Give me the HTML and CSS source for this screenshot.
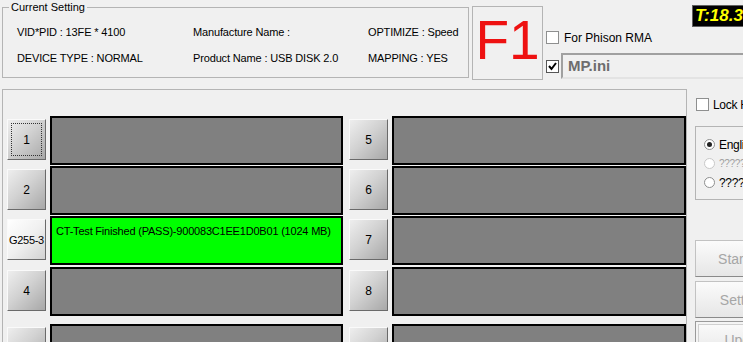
FILE: index.html
```html
<!DOCTYPE html>
<html>
<head>
    <title>MPTool</title>
    <link rel="stylesheet" href="styles.css">
</head>
<body>
    <div class="top">
        <!-- current device setting -->
        <fieldset class="current">
            <legend>Current Setting</legend>
            <div class="info">
                <span>VID*PID : 13FE * 4100</span>
                <span>Manufacture Name :</span>
                <span>OPTIMIZE : Speed</span>
                <span>DEVICE TYPE : NORMAL</span>
                <span>Product Name : USB DISK 2.0</span>
                <span>MAPPING : YES</span>
            </div>
        </fieldset>

        <div class="fkey">F1</div>

        <div class="options">
            <div class="temp">T:18.3&deg;C</div>
            <label class="check-row">
                <span class="check"></span>
                <span>For Phison RMA</span>
            </label>
            <div class="check-row ini-row">
                <span class="check checked">
                    <svg width="9" height="9" viewBox="0 0 9 9"><polyline points="1,4 3.5,7 8,1" fill="none" stroke="#000" stroke-width="2"/></svg>
                </span>
                <div class="ini">MP.ini</div>
            </div>
        </div>
    </div>

    <div class="bottom">
        <div class="panel">
            <div class="slots">
                <div class="slot"><button class="port focus">1</button><div class="bar"></div></div>
                <div class="slot"><button class="port">2</button><div class="bar"></div></div>
                <div class="slot"><button class="port light">G255-3</button><div class="bar pass">CT-Test Finished (PASS)-900083C1EE1D0B01 (1024 MB)</div></div>
                <div class="slot"><button class="port">4</button><div class="bar"></div></div>
                <div class="slot"><button class="port">9</button><div class="bar"></div></div>

                <div class="slot"><button class="port">5</button><div class="bar"></div></div>
                <div class="slot"><button class="port">6</button><div class="bar"></div></div>
                <div class="slot"><button class="port">7</button><div class="bar"></div></div>
                <div class="slot"><button class="port">8</button><div class="bar"></div></div>
                <div class="slot"><button class="port">13</button><div class="bar"></div></div>
            </div>
        </div>

        <div class="side">
            <label class="check-row lock">
                <span class="check"></span>
                <span>Lock HUB</span>
            </label>
            <div class="lang">
                <div class="radio-row"><span class="radio on"></span><span>English</span></div>
                <div class="radio-row disabled"><span class="radio"></span><span>????????</span></div>
                <div class="radio-row"><span class="radio"></span><span>????????</span></div>
            </div>
            <button class="action first">Start Test</button>
            <button class="action">Setting...</button>
            <button class="action last">Update</button>
        </div>
    </div>
</body>
</html>
```

FILE: styles.css
```css
body {
    margin: 0;
    width: 743px;
    height: 342px;
    overflow: hidden;
    background: #f0f0f0;
    font-family: "Liberation Sans", Arial, sans-serif;
    font-size: 11px;
    color: #000;
}

.top {
    display: flex;
    height: 85px;
}

.top > * {
    flex: none;
}

/* group box */
.current {
    margin: 1px 0 0 2px;
    padding: 0;
    width: 467px;
    height: 77px;
    box-sizing: border-box;
    border: 1px solid #b4b4b4;
    min-width: 0;
}

.current legend {
    margin-left: 6px;
    padding: 0 2px;
    line-height: 13px;
    font-size: 11px;
}

.info {
    display: grid;
    grid-template-columns: 176px 175px 1fr;
    grid-auto-rows: 26px;
    align-items: center;
    padding: 5px 0 0 14px;
    white-space: nowrap;
    letter-spacing: -0.15px;
}

.fkey {
    margin: 6px 0 0 3px;
    width: 71px;
    height: 74px;
    box-sizing: border-box;
    border: 1px solid #b4b4b4;
    display: flex;
    align-items: center;
    justify-content: center;
    padding-bottom: 5px;
    color: #ee1111;
    font-size: 55px;
    line-height: 1;
}

.options {
    margin-left: 3px;
    width: 210px;
}

.temp {
    margin: 5px 0 0 146px;
    height: 22px;
    box-sizing: border-box;
    border: 1px solid #606060;
    background: #000;
    color: #ffff00;
    font-weight: bold;
    font-style: italic;
    font-size: 17px;
    line-height: 20px;
    padding-left: 2px;
    white-space: nowrap;
    overflow: hidden;
}

.check-row {
    display: flex;
    align-items: center;
    gap: 5px;
    font-size: 12px;
}

.options .check-row:first-of-type {
    margin-top: 3px;
    height: 15px;
}

.check {
    width: 13px;
    height: 13px;
    box-sizing: border-box;
    border: 1px solid #8e8f8f;
    background: #fff;
    display: flex;
    align-items: center;
    justify-content: center;
    flex: none;
}

.check.checked {
    border-color: #555;
}

.ini-row {
    margin-top: 8px;
    gap: 2px;
}

.ini {
    flex: 1;
    height: 26px;
    box-sizing: border-box;
    border: 2px solid #a0a0a0;
    border-right: none;
    border-bottom-color: #e3e3e3;
    padding-left: 5px;
    color: #6d6d6d;
    font-weight: bold;
    font-size: 15px;
    line-height: 22px;
}

.bottom {
    display: flex;
}

.bottom > * {
    flex: none;
}

.panel {
    margin: 4px 0 0 2px;
    width: 685px;
    height: 300px;
    box-sizing: border-box;
    border: 1px solid #b4b4b4;
    padding: 26px 1px 0 4px;
}

.slots {
    display: grid;
    grid-template-columns: 336px 337px;
    column-gap: 6px;
    grid-template-rows: 50px 50px 51px 57px 50px;
    grid-auto-flow: column;
}

.slot {
    display: flex;
    align-items: flex-start;
    gap: 4px;
}

.port {
    margin-top: 3px;
    width: 39px;
    height: 41px;
    padding: 0;
    flex: none;
    border: 1px solid;
    border-color: #fafafa #6a6a6a #6a6a6a #fafafa;
    background: linear-gradient(135deg, #eeeeee 0%, #d2d2d2 45%, #a8a8a8 100%);
    font-family: "Liberation Sans", Arial, sans-serif;
    font-size: 12px;
    color: #000;
    white-space: nowrap;
    overflow: visible;
}

.port.focus {
    outline: 1px dotted #333;
    outline-offset: -5px;
}

.port.light {
    background: linear-gradient(135deg, #ffffff 0%, #f0f0f0 50%, #d2d2d2 100%);
    font-size: 11px;
    letter-spacing: -0.3px;
}

.bar {
    flex: 1;
    height: 49px;
    box-sizing: border-box;
    border: 2px solid #000;
    background: #808080;
}

.bar.pass {
    background: #00ff00;
    padding: 7px 0 0 4px;
    font-size: 11px;
    white-space: nowrap;
    letter-spacing: -0.2px;
}

.side {
    margin-left: 8px;
    width: 110px;
    padding-top: 13px;
}

.lock {
    height: 13px;
    gap: 4px;
    margin-left: 1px;
    letter-spacing: -0.3px;
}

.lang {
    margin-top: 15px;
    height: 74px;
    box-sizing: border-box;
    border: 1px solid #b4b4b4;
    border-right: none;
    padding: 8px 0 0 8px;
}

.radio-row {
    display: flex;
    align-items: center;
    gap: 4px;
    height: 19px;
    font-size: 12px;
    letter-spacing: -0.3px;
}

.radio-row.disabled {
    color: #a0a0a0;
    font-size: 10px;
}

.radio-row.disabled .radio {
    border-color: #c8c8c8;
}

.radio {
    width: 11px;
    height: 11px;
    box-sizing: border-box;
    border: 1px solid #8e8f8f;
    border-radius: 50%;
    background: #fff;
    position: relative;
    flex: none;
}

.radio.on::after {
    content: "";
    position: absolute;
    left: 2px;
    top: 2px;
    width: 5px;
    height: 5px;
    border-radius: 50%;
    background: #222;
}

.action {
    display: block;
    width: 104px;
    height: 37px;
    margin-top: 4px;
    padding: 0;
    border: 1px solid #c2c2c2;
    border-bottom-color: #8a8a8a;
    border-right: none;
    background: linear-gradient(#fbfbfb, #e6e6e6);
    color: #a6a6a6;
    font-family: "Liberation Sans", Arial, sans-serif;
    font-size: 14px;
    text-align: center;
    white-space: nowrap;
}

.action.first {
    margin-top: 40px;
}

.action.last {
    margin-top: 3px;
    border: 1px solid #9a9a9a;
    box-shadow: inset 0 0 0 2px #f4f4f4, inset 0 0 0 3px #d0d0d0;
}
```
